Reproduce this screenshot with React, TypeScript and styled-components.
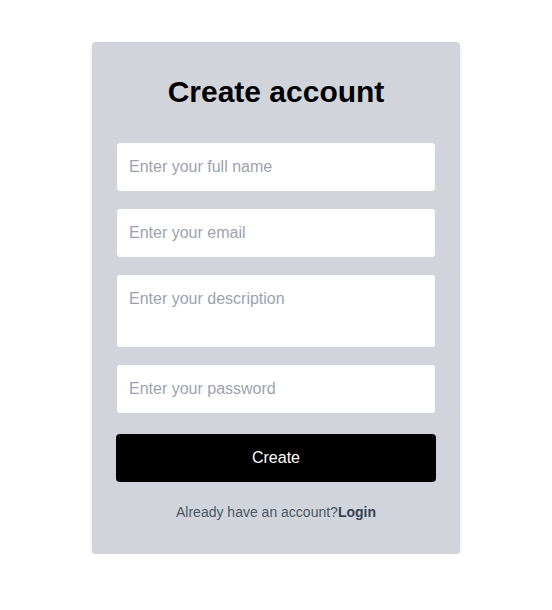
import styled, { createGlobalStyle } from "styled-components";

const GlobalStyle = createGlobalStyle`
  html, body {
    margin: 0;
    padding: 0;
    background: #ffffff;
    font-family: "Liberation Sans", Arial, sans-serif;
  }
  * {
    box-sizing: border-box;
  }
`;

const Page = styled.div`
  display: flex;
  justify-content: center;
  padding-top: 42px;
`;

const Card = styled.form`
  width: 368px;
  background: #d1d5db;
  border-radius: 4px;
  padding: 32px 24px;
  box-shadow: 0 4px 6px -1px rgba(0, 0, 0, 0.1), 0 2px 4px -2px rgba(0, 0, 0, 0.1);
  display: flex;
  flex-direction: column;
`;

const Title = styled.h1`
  margin: 0 0 32px;
  font-size: 30px;
  line-height: 36px;
  font-weight: 700;
  text-align: center;
  color: #000;
`;

const Fields = styled.div`
  display: flex;
  flex-direction: column;
  gap: 16px;
`;

const fieldBase = `
  width: 100%;
  border: 1px solid #d1d5db;
  border-radius: 4px;
  background: #fff;
  font-family: "Liberation Sans", Arial, sans-serif;
  font-size: 16px;
  color: #111827;
  padding: 0 12px;
  outline: none;
  &::placeholder {
    color: #9ca3af;
  }
`;

const Input = styled.input`
  ${fieldBase}
  height: 50px;
`;

const TextArea = styled.textarea`
  ${fieldBase}
  height: 74px;
  padding-top: 14px;
  resize: none;
  line-height: 20px;
`;

const SubmitButton = styled.button`
  margin-top: 20px;
  height: 48px;
  width: 100%;
  border: none;
  border-radius: 4px;
  background: #000;
  color: #fff;
  font-family: "Liberation Sans", Arial, sans-serif;
  font-size: 16px;
  cursor: pointer;
`;

const Footer = styled.p`
  margin: 20px 0 0;
  font-size: 14px;
  line-height: 20px;
  text-align: center;
  color: #4b5563;
`;

const LoginLink = styled.a`
  font-weight: 700;
  color: #374151;
  text-decoration: none;
`;

export default function App() {
  return (
    <>
      <GlobalStyle />
      <Page>
        <Card onSubmit={(e) => e.preventDefault()}>
          <Title>Create account</Title>
          <Fields>
            <Input type="text" placeholder="Enter your full name" />
            <Input type="email" placeholder="Enter your email" />
            <TextArea placeholder="Enter your description" />
            <Input type="password" placeholder="Enter your password" />
          </Fields>
          <SubmitButton type="submit">Create</SubmitButton>
          <Footer>
            Already have an account?<LoginLink href="#">Login</LoginLink>
          </Footer>
        </Card>
      </Page>
    </>
  );
}
